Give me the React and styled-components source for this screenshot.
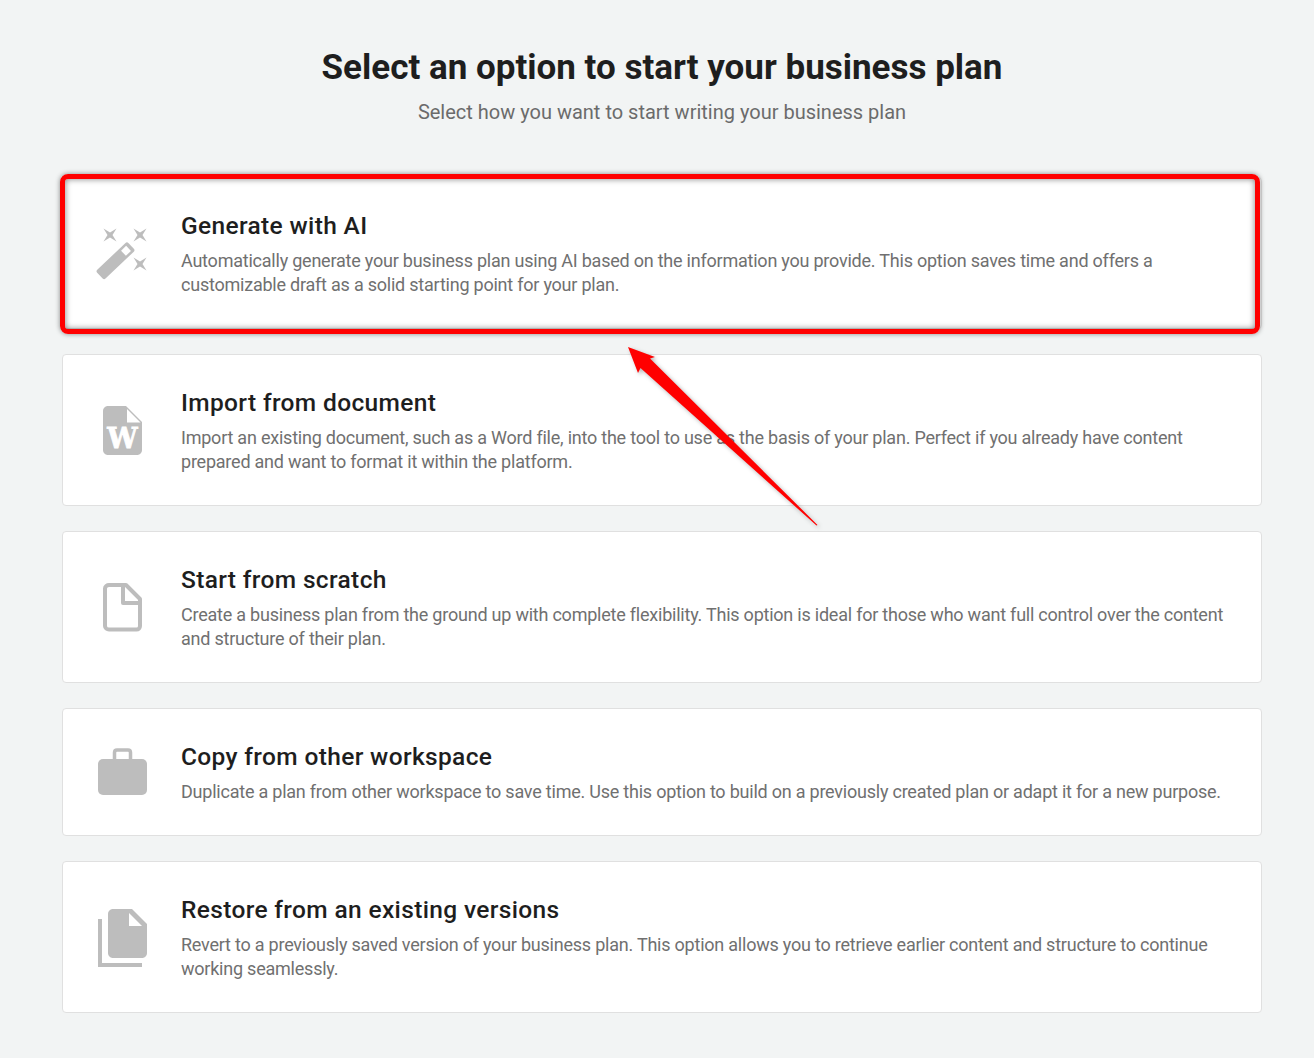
import React from 'react'
import styled, { createGlobalStyle } from 'styled-components'

const GlobalStyle = createGlobalStyle`
    html, body {
        margin: 0;
        padding: 0;
        background: #f2f4f4;
    }
    body {
        font-family: Roboto, "Liberation Sans", sans-serif;
    }
`

const WandIcon = () => (
    <IconSvg viewBox="0 0 50 60">
        <path d="M5.500 4.500L12 8.500l6.500-4-4 6.500 4 6.500-6.500-4-6.500 4 4-6.500z" />
        <path d="M35.500 4.500L42 8.500l6.500-4-4 6.500 4 6.500-6.500-4-6.500 4 4-6.500z" />
        <path d="M35.500 33.500L42 37.500l6.500-4-4 6.500 4 6.500-6.500-4-6.500 4 4-6.500z" />
        <g transform="translate(17.500 36.750) rotate(-43.500)">
            <rect x="-21.500" y="-6" width="43" height="12" rx="2" />
            <rect x="11" y="-3.500" width="7" height="7" fill="#fff" />
        </g>
    </IconSvg>
)

const WordIcon = () => (
    <IconSvg viewBox="0 0 50 60">
        <path d="M10 5h18l16 16v28c0 2.800-2.200 5-5 5H10c-2.800 0-5-2.200-5-5V10c0-2.800 2.200-5 5-5z" />
        <path fill="#fff" d="M29 8v13.500h13.500z" />
        <text
            x="24.500"
            y="47"
            textAnchor="middle"
            fontFamily='"DejaVu Serif", serif'
            fontWeight="700"
            fontSize="27"
            fill="#fff"
            stroke="#fff"
            strokeWidth="0.800"
        >
            W
        </text>
    </IconSvg>
)

const BlankFileIcon = () => (
    <IconSvg viewBox="0 0 50 60">
        <path
            fill="none"
            stroke="#bdbdbd"
            strokeWidth="4"
            strokeLinejoin="round"
            d="M11 7h17l14 14v27c0 2-1.500 3.500-3.500 3.500H11c-2 0-4-1.500-4-3.500V10.500C7 8.500 9 7 11 7zM25 7v18h17"
        />
    </IconSvg>
)

const CaseIcon = () => (
    <IconSvg viewBox="0 0 50 60">
        <path
            fill="none"
            stroke="#bdbdbd"
            strokeWidth="3.500"
            d="M16.500 17v-7.500c0-1.500 1-2.500 2.500-2.500h11c1.500 0 2.500 1 2.500 2.500v7.500"
        />
        <rect x="0" y="16" width="49" height="36" rx="5" />
    </IconSvg>
)

const CopyIcon = () => (
    <IconSvg viewBox="0 0 50 60">
        <path d="M15 1h19l15 15v29c0 2.800-2.200 5-5 5H15c-2.800 0-5-2.200-5-5V6c0-2.800 2.200-5 5-5z" />
        <path fill="#fff" d="M31 5v13h13z" />
        <path fill="none" stroke="#bdbdbd" strokeWidth="4" d="M2 11v46h42" />
    </IconSvg>
)

const options = [
    {
        icon: <WandIcon />,
        title: 'Generate with AI',
        text: 'Automatically generate your business plan using AI based on the information you provide. This option saves time and offers a customizable draft as a solid starting point for your plan.',
        highlighted: true,
    },
    {
        icon: <WordIcon />,
        title: 'Import from document',
        text: 'Import an existing document, such as a Word file, into the tool to use as the basis of your plan. Perfect if you already have content prepared and want to format it within the platform.',
    },
    {
        icon: <BlankFileIcon />,
        title: 'Start from scratch',
        text: 'Create a business plan from the ground up with complete flexibility. This option is ideal for those who want full control over the content and structure of their plan.',
    },
    {
        icon: <CaseIcon />,
        title: 'Copy from other workspace',
        text: 'Duplicate a plan from other workspace to save time. Use this option to build on a previously created plan or adapt it for a new purpose.',
    },
    {
        icon: <CopyIcon />,
        title: 'Restore from an existing versions',
        text: 'Revert to a previously saved version of your business plan. This option allows you to retrieve earlier content and structure to continue working seamlessly.',
    },
]

const App = () => {
    return (
        <>
            <GlobalStyle />
            <Page>
                <Header>
                    <Title>Select an option to start your business plan</Title>
                    <Subtitle>Select how you want to start writing your business plan</Subtitle>
                </Header>
                <List>
                    {options.map((option) => (
                        <Card key={option.title}>
                            <IconBox>{option.icon}</IconBox>
                            <Body>
                                <CardTitle>{option.title}</CardTitle>
                                <CardText>{option.text}</CardText>
                            </Body>
                            {option.highlighted && <Highlight />}
                        </Card>
                    ))}
                </List>
                <Arrow viewBox="0 0 200 190">
                    <path d="M0 0L27 10 22 11.500 189.500 178 188.500 178.500 12.500 21 10 26z" fill="#ff0000" />
                </Arrow>
            </Page>
        </>
    )
}

const Page = styled.div`
    position: relative;
    box-sizing: border-box;
    height: 1058px;
    padding: 45px 52px 0 62px;
    overflow: hidden;
`

const Header = styled.header`
    text-align: center;
    margin-bottom: 53px;
`

const Title = styled.h1`
    margin: 0 0 9px;
    font-size: 35px;
    line-height: 46px;
    font-weight: 700;
    color: #1e1e1e;
`

const Subtitle = styled.p`
    margin: 0;
    font-size: 20px;
    line-height: 24px;
    color: #6b6b6b;
`

const List = styled.div`
    display: flex;
    flex-direction: column;
    gap: 25px;
`

const Card = styled.div`
    position: relative;
    box-sizing: border-box;
    display: flex;
    align-items: center;
    gap: 33px;
    padding: 33px 36px 31px 35px;
    background: #fff;
    border: 1px solid #e0e0e0;
    border-radius: 4px;
`

const IconBox = styled.div`
    flex: none;
    width: 50px;
    height: 60px;
`

const IconSvg = styled.svg`
    display: block;
    width: 50px;
    height: 60px;
    fill: #bdbdbd;
    overflow: visible;
`

const Body = styled.div`
    flex: 1;
    min-width: 0;
`

const CardTitle = styled.h2`
    margin: 0 0 8px;
    font-size: 24.5px;
    line-height: 30px;
    font-weight: 500;
    letter-spacing: 0.35px;
    color: #1e1e1e;
`

const CardText = styled.p`
    margin: 0;
    font-size: 18px;
    line-height: 24px;
    letter-spacing: -0.225px;
    color: #707070;
`

const Highlight = styled.div`
    position: absolute;
    top: -4px;
    left: -3px;
    right: 1px;
    bottom: -6px;
    border: 5px solid #ff0000;
    border-radius: 8px;
    box-shadow: 0 0 5px rgba(0, 0, 0, 0.45), inset 0 0 6px rgba(0, 0, 0, 0.5);
    pointer-events: none;
`

const Arrow = styled.svg`
    position: absolute;
    top: 347px;
    left: 628px;
    width: 200px;
    height: 190px;
    overflow: visible;
    filter: drop-shadow(2px 2px 2px rgba(0, 0, 0, 0.3));
`

export default App
